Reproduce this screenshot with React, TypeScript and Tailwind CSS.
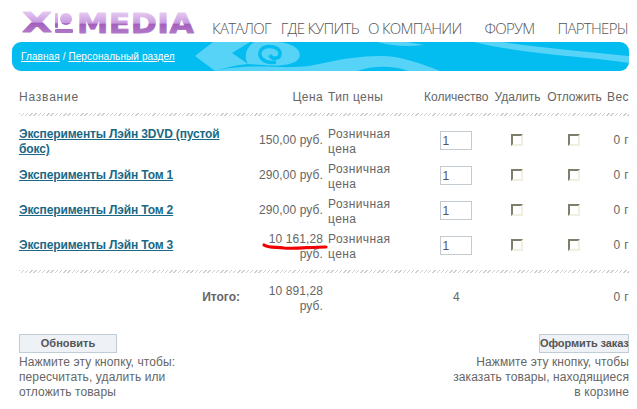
const rows = [
  { name: "Эксперименты Лэйн 3DVD (пустой бокс)", price: "150,00 руб.", twoLine: true, priceTwoLine: false },
  { name: "Эксперименты Лэйн Том 1", price: "290,00 руб.", twoLine: false, priceTwoLine: false },
  { name: "Эксперименты Лэйн Том 2", price: "290,00 руб.", twoLine: false, priceTwoLine: false },
  { name: "Эксперименты Лэйн Том 3", price: "10 161,28 руб.", twoLine: false, priceTwoLine: true },
];

const gridCols = "grid grid-cols-[239px_65px_98px_71px_51px_63px_23px]";

function Logo() {
  return (
    <svg width="176" height="28" viewBox="0 0 176 28" className="shrink-0 overflow-visible">
      <defs>
        <linearGradient id="logoShapes" gradientUnits="userSpaceOnUse" x1="0" y1="3" x2="0" y2="26">
          <stop offset="0" stopColor="#e6cdf2" />
          <stop offset="0.5" stopColor="#c99be0" />
          <stop offset="0.56" stopColor="#a35fbb" />
          <stop offset="1" stopColor="#b27aca" />
        </linearGradient>
        {/* text is translated down, so its gradient sits above the baseline */}
        <linearGradient id="logoText" gradientUnits="userSpaceOnUse" x1="0" y1="-21" x2="0" y2="1">
          <stop offset="0" stopColor="#e6cdf2" />
          <stop offset="0.5" stopColor="#c99be0" />
          <stop offset="0.56" stopColor="#a35fbb" />
          <stop offset="1" stopColor="#b27aca" />
        </linearGradient>
      </defs>
      <g strokeWidth="0.8" strokeLinejoin="round" fontFamily="'DejaVu Sans', sans-serif" fontWeight="700">
        <text transform="translate(0 24) scale(1.5 1)" fontSize="26" fill="url(#logoText)" stroke="url(#logoText)">X</text>
        <g fill="url(#logoShapes)">
          <rect x="33" y="5" width="3" height="15" rx="1" />
          <circle cx="44" cy="11" r="6" />
          <rect x="33" y="21" width="18" height="4" rx="1" />
        </g>
        <text transform="translate(55 25) scale(1.21 1)" fontSize="26" fill="url(#logoText)" stroke="url(#logoText)">MEDIA</text>
      </g>
    </svg>
  );
}

function BannerArt() {
  return (
    <svg viewBox="0 0 617 29" className="absolute inset-0 h-full w-full" fill="#58d3f8">
      <path d="M183 14 L201 0 H262 C280 0 291 8 287 16 C284 22 270 25 252 23 L236 22 C225 23 212 26 203 29 Z" />
      <path d="M203 29 C220 24 250 24 268 25 C290 26 320 22 333 18 V22 C315 27 300 29 290 29 Z" />
      <path d="M220 11 L238 0 H242 C233 6 232 16 236 22 Z" fill="#04bdf0" />
      <path d="M264 20 C252 22 245 15 249 8 C254 2 268 4 268 12 C268 17 260 18 258 13" fill="none" stroke="#04bdf0" strokeWidth="3.5" />
      <path d="M272 29 C295 26 330 14 368 14 C390 14 410 22 428 29 H396 C380 23 360 24 345 29 Z" />
      <path d="M300 29 C312 27 322 25 335 25 L328 29 Z" />
      <path d="M365 0 C380 4 395 5 412 3 L395 0 Z" />
      <path d="M462 0 H490 C530 6 580 10 617 14 V21 C570 14 510 12 462 0 Z" />
    </svg>
  );
}

function Checkbox() {
  return <div className="h-[12px] w-[12px] border-2 border-t-[#7f7d6c] border-l-[#7f7d6c] border-r-[#f1efe2] border-b-[#f1efe2] bg-white" />;
}

function Hatch() {
  return <div className="h-[3px] bg-[repeating-linear-gradient(135deg,#cfcfcf_0,#cfcfcf_1px,#ffffff_1px,#ffffff_3px)]" />;
}

export default function App() {
  return (
    <div className="relative h-[409px] w-[637px] overflow-hidden bg-white font-['Liberation_Sans',sans-serif] text-[12px] leading-[15px] tracking-[0.4px] text-[#666666]">
      <div className="flex h-[42px] items-start">
        <div className="ml-[22px] mt-[8px]">
          <Logo />
        </div>
        <nav className="ml-[14px] mt-[18px] flex whitespace-nowrap font-['Open_Sans',sans-serif] text-[15px] font-light leading-[20px] tracking-[-0.7px] text-[#555555]">
          <span>КАТАЛОГ</span>
          <span className="ml-[10px]">ГДЕ КУПИТЬ</span>
          <span className="ml-[9px]">О КОМПАНИИ</span>
          <span className="ml-[23px]">ФОРУМ</span>
          <span className="ml-[23px]">ПАРТНЕРЫ</span>
        </nav>
      </div>

      <div className="relative ml-[12px] h-[29px] w-[617px] overflow-hidden rounded-[9px] bg-[#04bdf0]">
        <BannerArt />
        <div className="relative pl-[9px] pt-[7px] text-[10px] tracking-[0.1px] text-white">
          <span className="underline">Главная</span> / <span className="underline">Персональный раздел</span>
        </div>
      </div>

      <div className="ml-[19px] w-[610px]">
        <div className={`${gridCols} mt-[18px] pt-px`}>
          <div className="tracking-[0.8px]">Название</div>
          <div className="text-right">Цена</div>
          <div className="pl-[5px]">Тип цены</div>
          <div className="pl-[3px] tracking-normal">Количество</div>
          <div className="text-center tracking-normal">Удалить</div>
          <div className="text-center tracking-normal">Отложить</div>
          <div className="text-right">Вес</div>
        </div>

        <div className="mt-[8px]">
          <Hatch />
        </div>

        <div className="mt-[10px] flex flex-col gap-[5px]">
          {rows.map((row) => (
            <div key={row.name} className={`${gridCols} h-[30px] items-start`}>
              <a className={`${row.twoLine ? "pt-px" : "pt-[7px]"} pr-[10px] font-bold tracking-[-0.15px] text-[#1a6884] underline`}>{row.name}</a>
              <div className={`${row.priceTwoLine ? "pt-px" : "pt-[7px]"} text-right tracking-[0.1px]`}>{row.price}</div>
              <div className="w-[80px] pl-[5px] pt-px">Розничная цена</div>
              <div className="flex justify-center pr-[2px] pt-[5px]">
                <input
                  readOnly
                  value="1"
                  className="h-[19px] w-[32px] border border-[#c3cbd1] pl-[2px] font-['Liberation_Sans',sans-serif] text-[12px] text-[#555555]"
                />
              </div>
              <div className="flex justify-center pr-[2px] pt-[8px]">
                <Checkbox />
              </div>
              <div className="flex justify-center pr-[2px] pt-[8px]">
                <Checkbox />
              </div>
              <div className="whitespace-nowrap pt-[7px] text-right">0 г</div>
            </div>
          ))}
        </div>

        <div className="mt-[9px]">
          <Hatch />
        </div>

        <div className={`${gridCols} mt-[10px] h-[30px] items-start`}>
          <div className="pr-[18px] pt-[7px] text-right font-bold tracking-normal">Итого:</div>
          <div className="pt-px text-right tracking-[0.1px]">10 891,28 руб.</div>
          <div />
          <div className="pt-[7px] text-center">4</div>
          <div />
          <div />
          <div className="whitespace-nowrap pt-[7px] text-right">0 г</div>
        </div>

        <div className="mt-[21px] flex justify-between tracking-[0.1px]">
          <div className="w-[180px]">
            <button className="block h-[19px] w-[98px] border border-[#c0ccd6] bg-[#eef1f6] text-[11px] font-bold tracking-normal text-[#555555]">
              Обновить
            </button>
            <p className="pt-[2px]">Нажмите эту кнопку, чтобы: пересчитать, удалить или отложить товары</p>
          </div>
          <div className="flex w-[180px] flex-col items-end text-right">
            <button className="block h-[19px] w-[90px] border border-[#c0ccd6] bg-[#eef1f6] text-[11px] font-bold tracking-[-0.1px] whitespace-nowrap text-[#555555]">
              Оформить заказ
            </button>
            <p className="pt-[2px]">Нажмите эту кнопку, чтобы заказать товары, находящиеся в корзине</p>
          </div>
        </div>
      </div>

      {/* red marker stroke over the price */}
      <svg width="70" height="10" viewBox="0 0 70 10" className="absolute left-[260px] top-[241px]">
        <path d="M4 4 C8 7 15 6 24 7 C36 8 50 6 66 6" fill="none" stroke="#f00000" strokeWidth="3.2" strokeLinecap="round" />
      </svg>
    </div>
  );
}
